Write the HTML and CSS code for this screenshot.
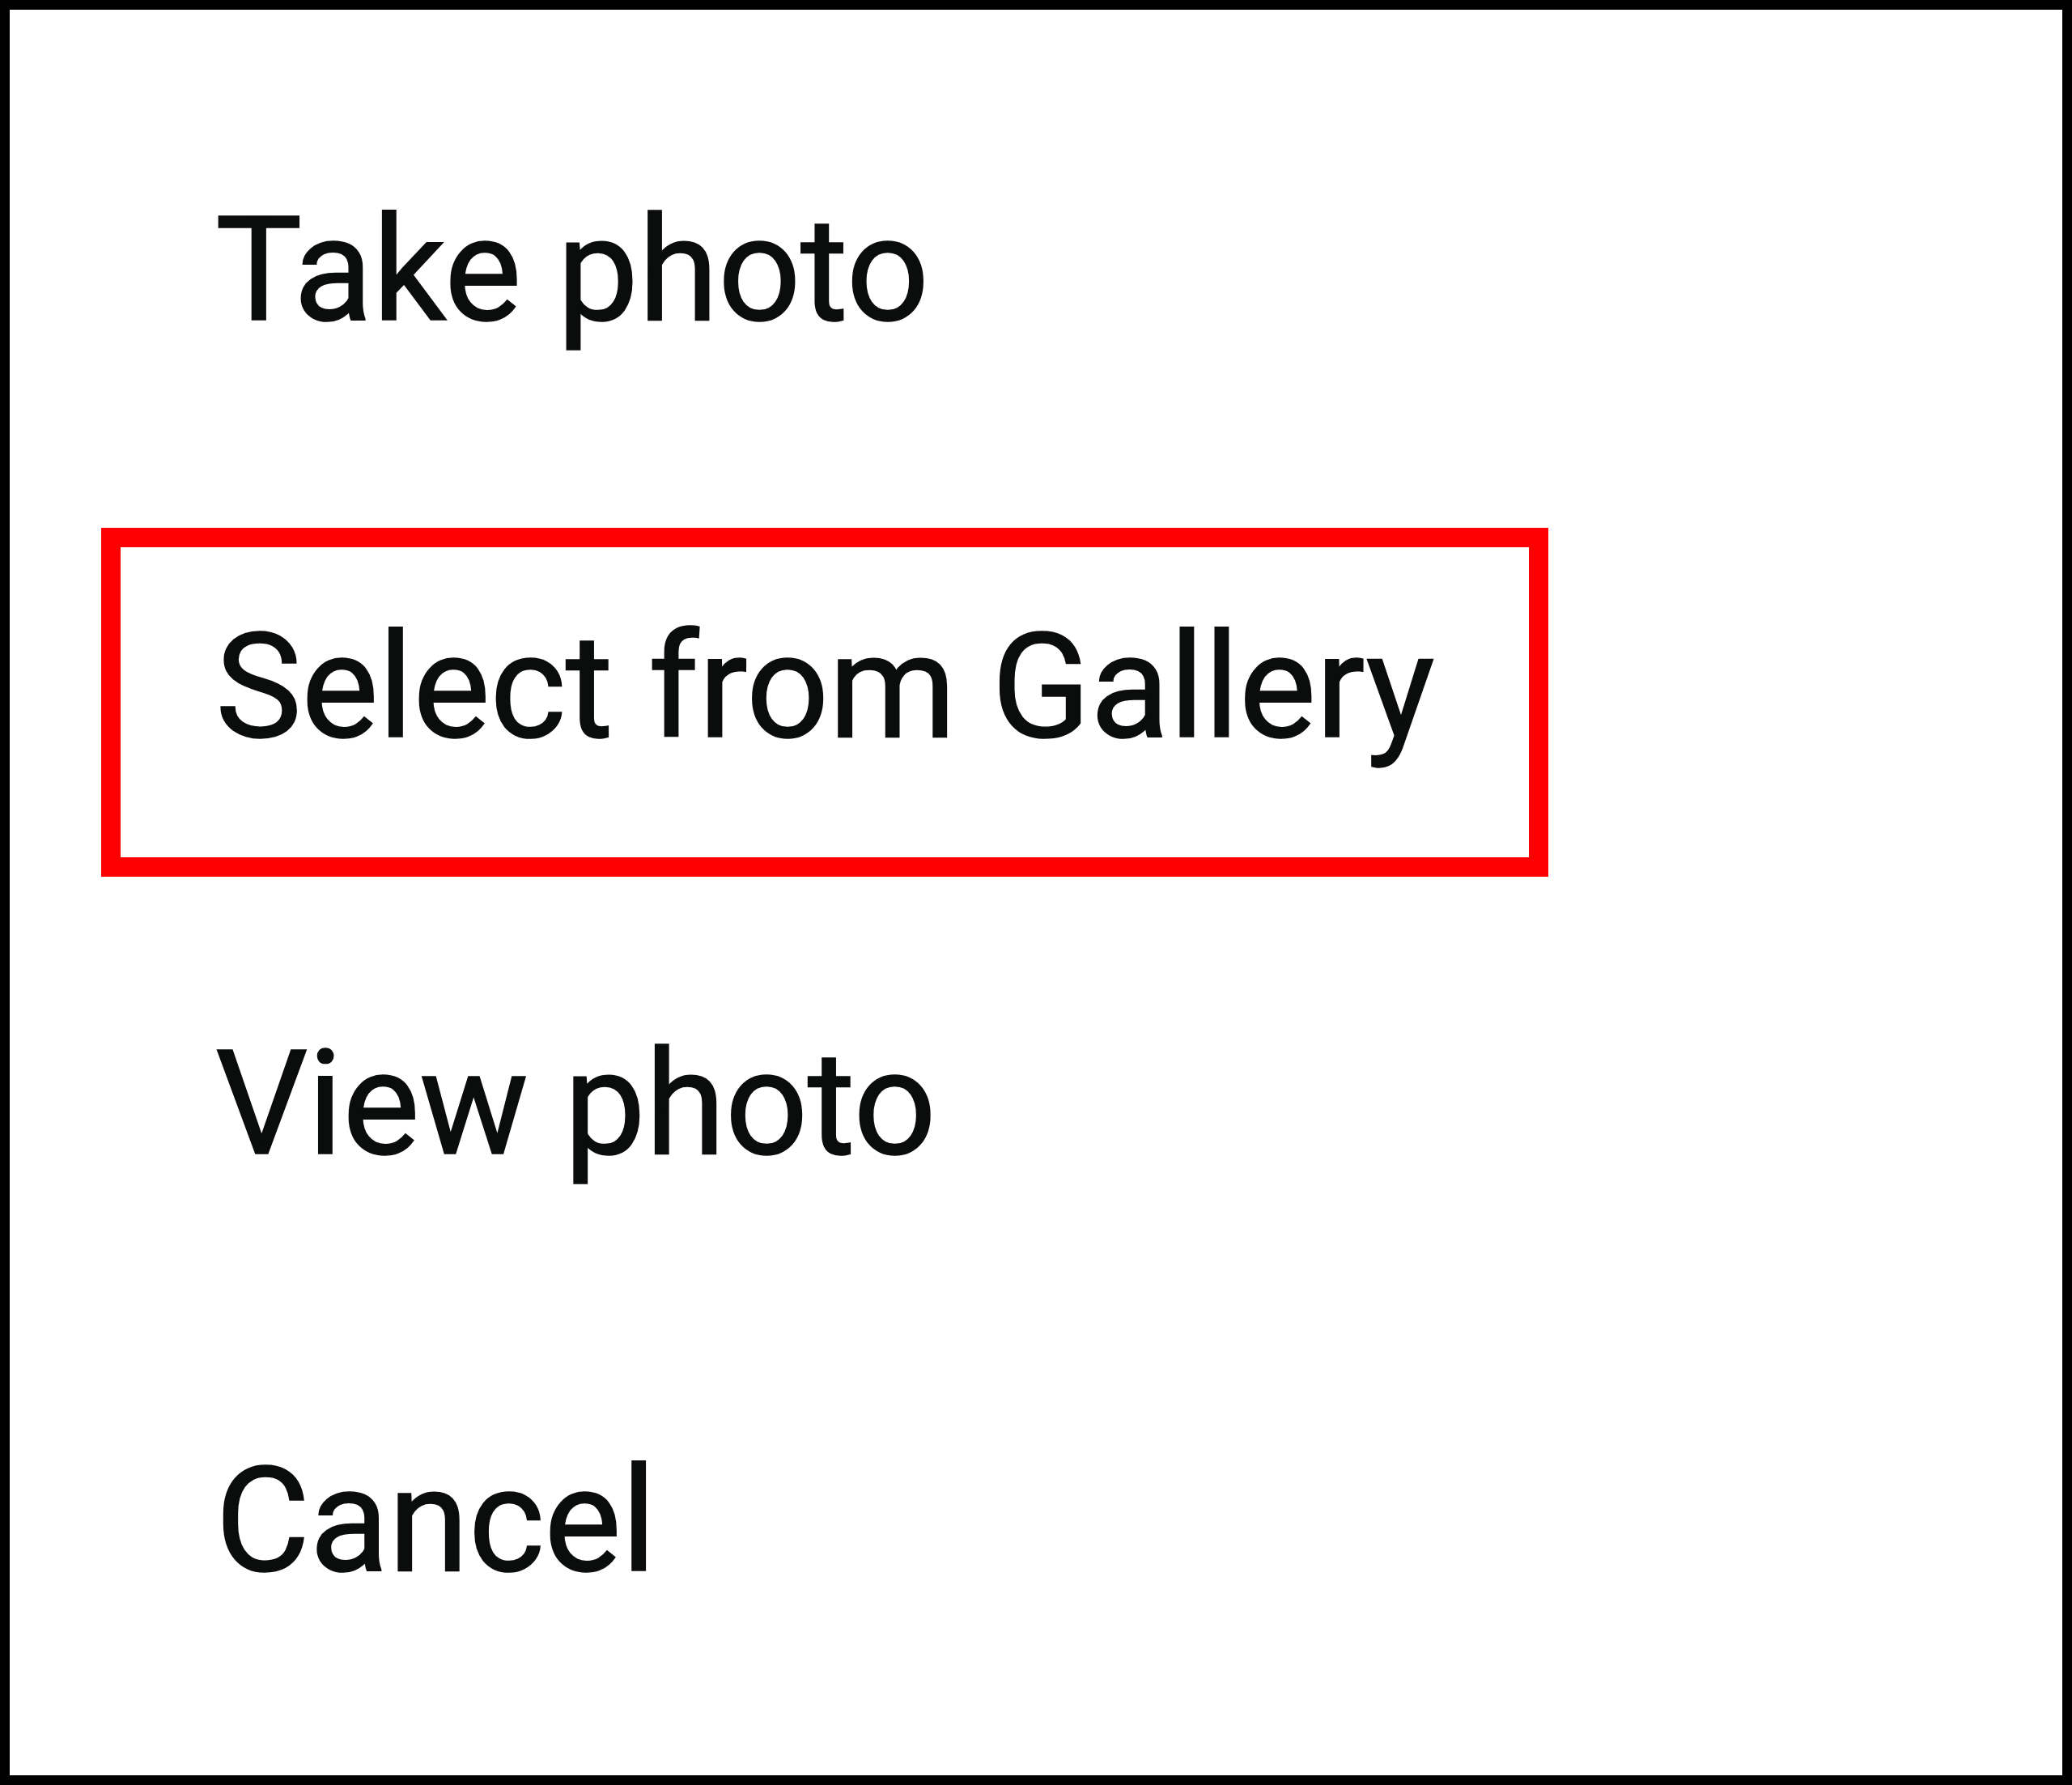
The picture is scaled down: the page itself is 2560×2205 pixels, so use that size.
FILE: index.html
```html
<!DOCTYPE html>
<html lang="en">
<head>
<meta charset="utf-8">
<title>Photo options</title>
<link rel="stylesheet" href="styles.css">
</head>
<body>
<div class="sheet">
  <ul class="menu">
    <li class="item">Take photo</li>
    <li class="item item--marked">Select from Gallery</li>
    <li class="item">View photo</li>
    <li class="item">Cancel</li>
  </ul>
</div>
</body>
</html>
```
FILE: styles.css
```css
html, body {
  margin: 0;
  padding: 0;
  background: #ffffff;
}
.sheet {
  width: 2560px;
  height: 2205px;
  box-sizing: border-box;
  border: 12px solid #000000;
  background: #ffffff;
  padding-top: 64px;
}
.menu {
  list-style: none;
  margin: 0;
  padding: 0;
}
.item {
  position: relative;
  height: 515px;
  display: flex;
  align-items: center;
  padding-left: 254px;
  font-family: Roboto, "Liberation Sans", sans-serif;
  font-weight: 400;
  font-size: 180px;
  line-height: 1;
  letter-spacing: -0.6px;
  color: #0b0d0d;
  -webkit-text-stroke: 1.5px #0b0d0d;
}
.item--marked::after {
  content: "";
  position: absolute;
  left: 113px;
  top: 61px;
  width: 1788px;
  height: 431px;
  box-sizing: border-box;
  border: 24px solid #ff0000;
}
```
